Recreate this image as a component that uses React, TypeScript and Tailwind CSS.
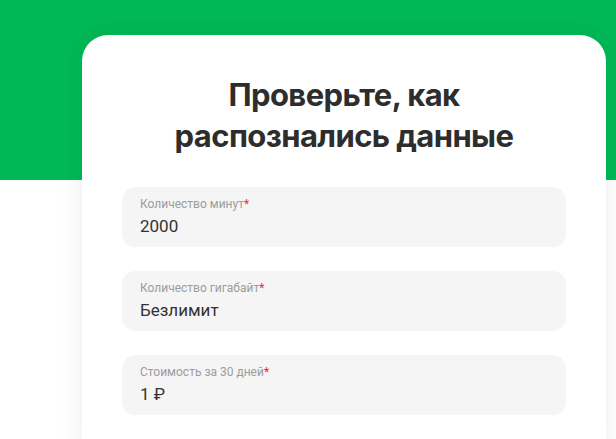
import React from "react";

const fields = [
  { label: "Количество минут", value: "2000" },
  { label: "Количество гигабайт", value: "Безлимит" },
  { label: "Стоимость за 30 дней", value: "1 ₽" },
];

function Field({ label, value }: { label: string; value: string }) {
  return (
    <div className="rounded-[14px] bg-[#f5f5f5] pl-[18px] pr-4 pt-[9px] pb-[11px]">
      <div className="text-[12px] leading-[16px] text-[#9c9c9c]">
        {label}
        <span className="text-[#f62434]">*</span>
      </div>
      <div className="mt-[4px] text-[17px] leading-[20px] text-[#333333]">{value}</div>
    </div>
  );
}

export default function App() {
  return (
    <div className="min-h-[439px] overflow-hidden bg-white font-['Roboto','Liberation_Sans',sans-serif]">
      <div className="h-[180px] bg-[#00b956]" />
      <div className="-mt-[145px] pl-[82px] pr-[10px]">
        <div className="rounded-t-[26px] bg-white px-10 pt-[39px] pb-10 shadow-[0_0_24px_rgba(0,0,0,0.08)]">
          <h1 className="text-center font-['Inter',sans-serif] text-[31px] font-bold leading-[41px] tracking-[-0.6px] text-[#2d2d2d]">
            Проверьте, как
            <br />
            распознались данные
          </h1>
          <div className="mt-[31px] flex flex-col gap-6">
            {fields.map((f) => (
              <Field key={f.label} label={f.label} value={f.value} />
            ))}
          </div>
        </div>
      </div>
    </div>
  );
}
